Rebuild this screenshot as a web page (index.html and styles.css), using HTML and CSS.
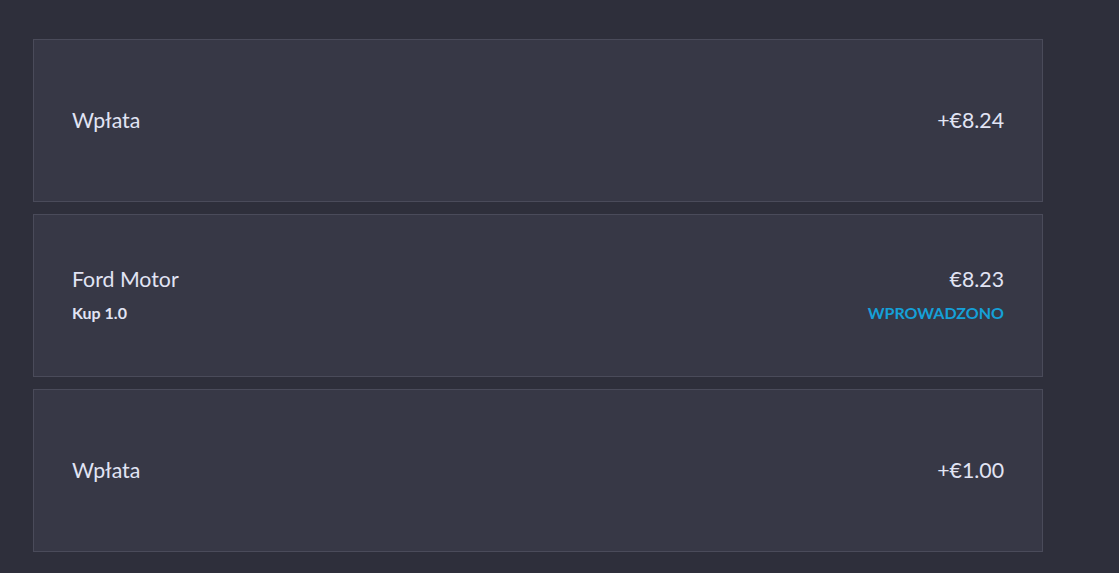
FILE: index.html
```html
<!DOCTYPE html>
<html lang="pl">
<head>
  <meta charset="UTF-8">
  <title>Historia transakcji</title>
  <link rel="stylesheet" href="styles.css">
</head>
<body>
  <div class="history">
    <div class="tx-card">
      <div class="tx-left">
        <div class="tx-title">Wpłata</div>
      </div>
      <div class="tx-right">
        <div class="tx-amount">+€8.24</div>
      </div>
    </div>
    <div class="tx-card">
      <div class="tx-left">
        <div class="tx-title">Ford Motor</div>
        <div class="tx-sub">Kup 1.0</div>
      </div>
      <div class="tx-right">
        <div class="tx-amount">€8.23</div>
        <div class="tx-status">Wprowadzono</div>
      </div>
    </div>
    <div class="tx-card">
      <div class="tx-left">
        <div class="tx-title">Wpłata</div>
      </div>
      <div class="tx-right">
        <div class="tx-amount">+€1.00</div>
      </div>
    </div>
  </div>
</body>
</html>
```

FILE: styles.css
```css
:root {
  --background: #2e2f3b;
  --card: #373846;
  --border: #4a4b5a;
  --foreground: #e1e4f4;
  --accent: #15a0d8;
}

body {
  margin: 0;
  padding: 39px 33px;
  background-color: var(--background);
  color: var(--foreground);
  font-family: Lato, 'Open Sans', sans-serif;
}

.history {
  width: 1010px;
  display: flex;
  flex-direction: column;
  gap: 12px;
}

.tx-card {
  box-sizing: border-box;
  height: 163px;
  padding: 0 38px;
  display: flex;
  align-items: center;
  justify-content: space-between;
  background-color: var(--card);
  border: 1px solid var(--border);
}

.tx-left,
.tx-right {
  display: flex;
  flex-direction: column;
  gap: 8px;
}

.tx-right {
  align-items: flex-end;
}

.tx-title,
.tx-amount {
  font-size: 21.3px;
  line-height: 25px;
}

.tx-sub {
  font-size: 16px;
  font-weight: 700;
  line-height: 25px;
}

.tx-status {
  font-size: 16px;
  font-weight: 700;
  line-height: 25px;
  text-transform: uppercase;
  color: var(--accent);
}
```
